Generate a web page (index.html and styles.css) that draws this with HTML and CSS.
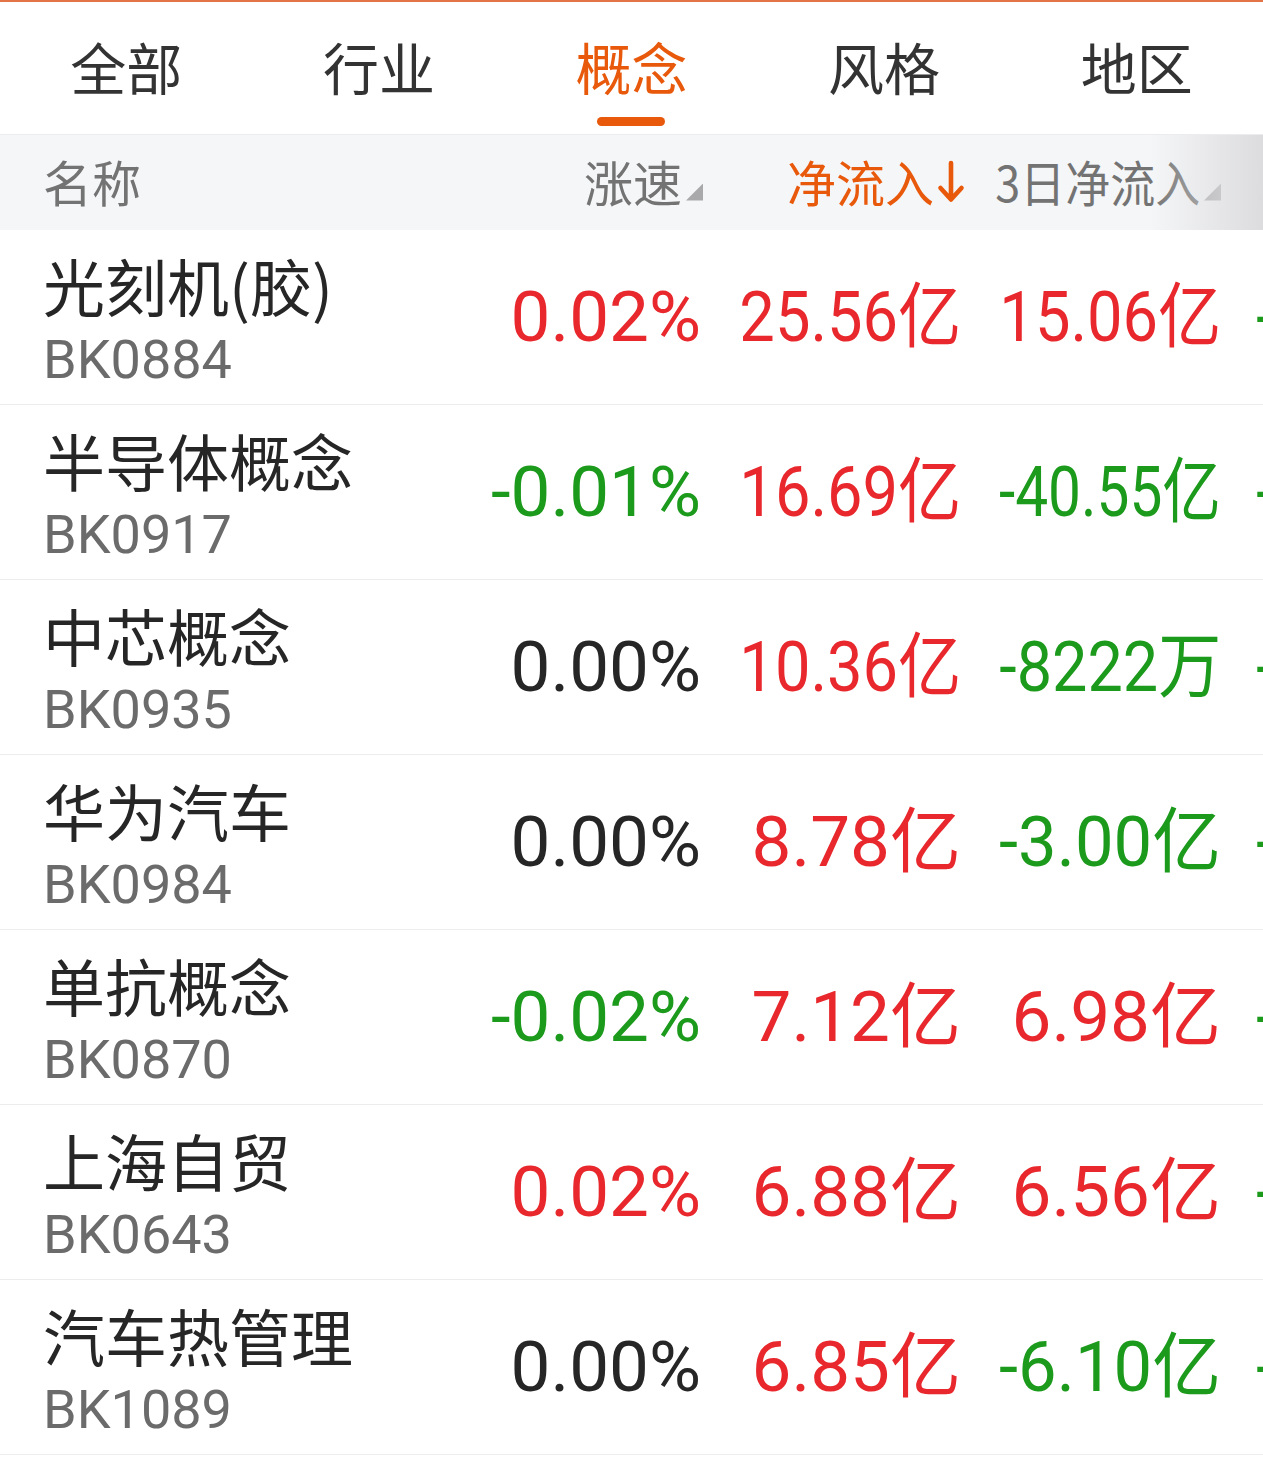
FILE: index.html
```html
<!DOCTYPE html>
<html lang="zh-CN">
<head>
<meta charset="utf-8">
<title>板块资金流</title>
<link rel="stylesheet" href="styles.css">
</head>
<body>
<div class="page">
  <div class="topline"></div>
  <nav class="tabs">
    <div class="tab"><span class="tab-text">全部</span></div>
    <div class="tab"><span class="tab-text">行业</span></div>
    <div class="tab active"><span class="tab-text">概念</span><span class="tab-bar"></span></div>
    <div class="tab"><span class="tab-text">风格</span></div>
    <div class="tab"><span class="tab-text">地区</span></div>
  </nav>

  <div class="table">
    <div class="head">
      <div class="hcell hname">名称</div>
      <div class="hcell hnum"><span>涨速</span><span class="tri"></span></div>
      <div class="hcell hnum hactive"><span>净流入</span><svg class="arrow" viewBox="0 0 28 44" width="28" height="44"><path d="M14 3 V39 M3.5 28 L14 39.5 L24.5 28" fill="none" stroke="#e8590c" stroke-width="4.6" stroke-linecap="round" stroke-linejoin="round"/></svg></div>
      <div class="hcell hnum"><span class="fit" data-max="205">3日净流入</span><span class="tri"></span></div>
      <div class="hcell hnext">5日净流入</div>
    </div>

    <div class="row">
      <div class="name"><div class="title">光刻机(胶)</div><div class="code">BK0884</div></div>
      <div class="num red"><span class="fit">0.02%</span></div>
      <div class="num red"><span class="fit">25.56亿</span></div>
      <div class="num red"><span class="fit">15.06亿</span></div>
      <div class="num next green">-2.31亿</div>
    </div>
    <div class="row">
      <div class="name"><div class="title">半导体概念</div><div class="code">BK0917</div></div>
      <div class="num green"><span class="fit">-0.01%</span></div>
      <div class="num red"><span class="fit">16.69亿</span></div>
      <div class="num green"><span class="fit">-40.55亿</span></div>
      <div class="num next green">-58.20亿</div>
    </div>
    <div class="row">
      <div class="name"><div class="title">中芯概念</div><div class="code">BK0935</div></div>
      <div class="num black"><span class="fit">0.00%</span></div>
      <div class="num red"><span class="fit">10.36亿</span></div>
      <div class="num green"><span class="fit">-8222万</span></div>
      <div class="num next green">-9.47亿</div>
    </div>
    <div class="row">
      <div class="name"><div class="title">华为汽车</div><div class="code">BK0984</div></div>
      <div class="num black"><span class="fit">0.00%</span></div>
      <div class="num red"><span class="fit">8.78亿</span></div>
      <div class="num green"><span class="fit">-3.00亿</span></div>
      <div class="num next green">-12.66亿</div>
    </div>
    <div class="row">
      <div class="name"><div class="title">单抗概念</div><div class="code">BK0870</div></div>
      <div class="num green"><span class="fit">-0.02%</span></div>
      <div class="num red"><span class="fit">7.12亿</span></div>
      <div class="num red"><span class="fit">6.98亿</span></div>
      <div class="num next green">-1.08亿</div>
    </div>
    <div class="row">
      <div class="name"><div class="title">上海自贸</div><div class="code">BK0643</div></div>
      <div class="num red"><span class="fit">0.02%</span></div>
      <div class="num red"><span class="fit">6.88亿</span></div>
      <div class="num red"><span class="fit">6.56亿</span></div>
      <div class="num next green">-3.91亿</div>
    </div>
    <div class="row">
      <div class="name"><div class="title">汽车热管理</div><div class="code">BK1089</div></div>
      <div class="num black"><span class="fit">0.00%</span></div>
      <div class="num red"><span class="fit">6.85亿</span></div>
      <div class="num green"><span class="fit">-6.10亿</span></div>
      <div class="num next green">-7.42亿</div>
    </div>
  </div>
</div>
<script src="app.js"></script>
</body>
</html>
```

FILE: styles.css
```css
* { box-sizing: border-box; }

html, body {
  margin: 0;
  padding: 0;
  background: #ffffff;
}

body {
  font-family: "Noto Sans CJK SC", "Noto Sans", sans-serif;
  color: #2a2a2a;
  overflow: hidden;
}

.page {
  width: 1263px;
  overflow: hidden;
}

.topline {
  height: 2px;
  background: #e37448;
}

/* Tabs */
.tabs {
  display: grid;
  grid-template-columns: repeat(5, 1fr);
  height: 132px;
  background: #ffffff;
}

.tab {
  display: flex;
  flex-direction: column;
  align-items: center;
  padding-top: 34px;
}

.tab-text {
  font-size: 56px;
  line-height: 60px;
  color: #333333;
}

.tab.active .tab-text {
  color: #e8590c;
}

.tab-bar {
  margin-top: 21px;
  width: 68px;
  height: 9px;
  border-radius: 5px;
  background: #e8590c;
}

/* Table */
.table {
  width: 1263px;
  overflow: hidden;
}

.head,
.row {
  display: grid;
  grid-template-columns: 438px 220px 260px 260px 260px;
  padding-left: 43px;
  width: 1523px;
}

.head {
  position: relative;
  height: 96px;
  background: #f5f6f8;
  border-top: 1px solid #ececec;
  align-items: center;
}

.head::after {
  content: "";
  position: absolute;
  top: 0;
  bottom: 0;
  left: 1150px;
  width: 113px;
  background: linear-gradient(to right, rgba(220, 220, 222, 0), rgba(220, 220, 222, 1));
}

.hcell {
  font-size: 49px;
  line-height: 60px;
  color: #737373;
  white-space: nowrap;
}

.hname {
  margin-top: -4px;
}

.hnum {
  display: flex;
  justify-content: flex-end;
  align-items: center;
  margin-top: -4px;
}

.hnum:nth-child(2) { margin-right: -2px; }
.hnum:nth-child(3) { margin-right: -4px; }
.hnum:nth-child(4) { margin-right: 0; }

.hactive {
  color: #e8590c;
}

.arrow {
  display: block;
  margin-left: 3px;
  margin-top: 2px;
}

.tri {
  display: inline-block;
  flex: none;
  width: 17px;
  height: 17px;
  margin-left: 4px;
  align-self: flex-end;
  margin-bottom: 10px;
  background: #a9a9ab;
  clip-path: polygon(100% 0, 100% 100%, 0 100%);
}

.hnext {
  padding-left: 35px;
  color: #d4d4d6;
  margin-top: -4px;
}

.fit {
  display: inline-block;
  flex: none;
  transform-origin: right center;
  white-space: nowrap;
}

.row {
  height: 175px;
  border-bottom: 1px solid #ededed;
  align-items: center;
}

.name {
  align-self: start;
  padding-top: 17px;
}

.title {
  font-size: 62px;
  line-height: 76px;
  color: #262626;
  white-space: nowrap;
}

.code {
  font-family: Roboto, "Noto Sans", sans-serif;
  font-size: 54px;
  line-height: 74px;
  color: #6b6b6b;
}

.num {
  display: flex;
  justify-content: flex-end;
  align-items: center;
  font-family: Roboto, "Noto Sans CJK SC", sans-serif;
  font-size: 71px;
  line-height: 80px;
  white-space: nowrap;
}

.num.next {
  justify-content: flex-start;
  padding-left: 35px;
}

.red { color: #e8282c; }
.green { color: #1c9a1c; }
.black { color: #262626; }
```

FILE: app.js
```js
// Shrink values horizontally to fit their column, as the app's text views do.
document.querySelectorAll('.fit').forEach(function (el) {
  var max = parseFloat(el.dataset.max || '222');
  var w = el.getBoundingClientRect().width;
  if (w > max) {
    el.style.transform = 'scaleX(' + (max / w).toFixed(4) + ')';
  }
});
```
